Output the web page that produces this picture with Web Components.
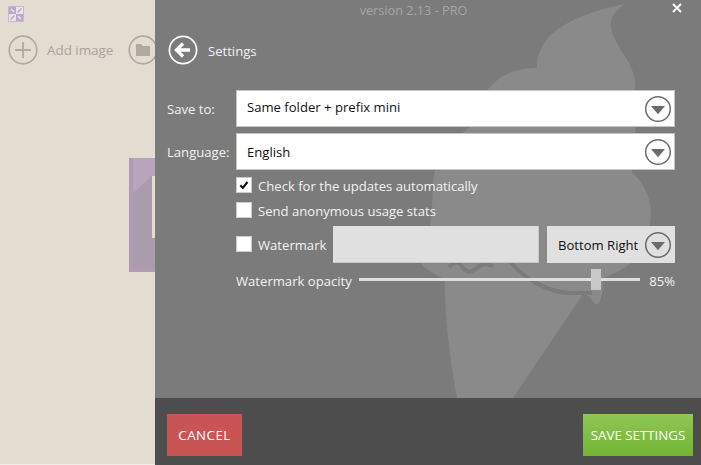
<!DOCTYPE html>
<html>
<head>
<meta charset="utf-8">
<title>Settings</title>
<style>
html,body{margin:0;height:100%;overflow:hidden;background:#e3ddd1;}
body{font:13.1px "Open Sans",sans-serif;}
settings-select[label="Save to:"]{--nudge:3px;}
</style>
</head>
<body>
<app-window>
	<side-pane slot="side"></side-pane>
	<settings-panel slot="panel">
		<settings-select label="Save to:" value="Same folder + prefix mini"></settings-select>
		<settings-select label="Language:" value="English"></settings-select>
		<settings-check checked>Check for the updates automatically</settings-check>
		<settings-check>Send anonymous usage stats</settings-check>
		<watermark-row></watermark-row>
		<opacity-slider value="85"></opacity-slider>
	</settings-panel>
</app-window>
<script>
const ARROW=`<svg class="arrow" width="28" height="28" viewBox="0 0 28 28"><circle cx="14" cy="14" r="12.3" fill="none" stroke="#6b6b6b" stroke-width="1.5"/><path d="M7 11h14l-7 8.300z" fill="#6b6b6b"/></svg>`;

function tpl(html){
	const t=document.createElement('template');
	t.innerHTML=html;
	return t;
}

const appTpl=tpl(`
<style>
	:host{display:flex;width:701px;height:465px;overflow:hidden;}
	::slotted([slot=side]){flex:0 0 155px;}
	::slotted([slot=panel]){flex:1;}
</style>
<slot name="side"></slot><slot name="panel"></slot>`);
class AppWindow extends HTMLElement{
	constructor(){
		super();
		this.attachShadow({mode:'open'}).appendChild(appTpl.content.cloneNode(true));
	}
}
customElements.define('app-window',AppWindow);

const sideTpl=tpl(`
<style>
	:host{display:block;position:relative;overflow:hidden;background:#e3ddd1;box-sizing:border-box;padding:6px 0 0 8px;height:465px;border-bottom:1px solid #f1eee8;}
	.logo{display:block;}
	.tools{display:flex;align-items:center;margin-top:13px;width:200px;color:#a7a399;font-size:13.4px;}
	.tools svg{display:block;flex:none;}
	.tools span{margin:0 15px 0 9px;white-space:nowrap;}
	.thumb{position:absolute;left:129px;top:158px;width:40px;height:114px;background:#b9a4be;overflow:hidden;}
	.thumb i{position:absolute;left:4px;top:18px;width:40px;height:92px;background:#aa9cad;clip-path:polygon(0 17px,19px 0,100% 0,100% 100%,0 100%);}
	.thumb b{position:absolute;left:0;top:0;width:4px;height:114px;background:#b09ab5;}
	.thumb s{position:absolute;left:0;bottom:0;width:40px;height:4px;background:#b09ab5;}
	.thumb u{position:absolute;left:23px;top:18px;width:3px;height:62px;background:#e2dfcf;}
</style>
<svg class="logo" width="16" height="16" viewBox="0 0 16 16"><rect width="16" height="16" fill="#c9b6d2"/><rect x="1" y="1" width="14" height="14" fill="#bda6c9"/><rect x="8" y="1" width="7" height="7" fill="#e9e3ea"/><rect x="1" y="8" width="7" height="7" fill="#e9e3ea"/><path d="M13.500 2.500L9.500 6.500M2.500 13.500l4-4" stroke="#bda6c9" stroke-width="1.500"/><path d="M3 3l3 3M13 13l-3-3" stroke="#ebe5ee" stroke-width="1.500"/></svg>
<div class="tools">
	<svg width="30" height="30" viewBox="0 0 30 30"><circle cx="15" cy="15" r="13.8" fill="none" stroke="#aeaaa0" stroke-width="1.7"/><path d="M15 7v16M7 15h16" stroke="#aeaaa0" stroke-width="1.8"/></svg>
	<span>Add image</span>
	<svg width="30" height="30" viewBox="0 0 30 30"><circle cx="15" cy="15" r="13.8" fill="none" stroke="#aeaaa0" stroke-width="1.7"/><path d="M8 9h5l1.500 2H22v10H8z" fill="#aeaaa0"/></svg>
</div>
<div class="thumb"><b></b><s></s><i></i><u></u></div>`);
class SidePane extends HTMLElement{
	constructor(){
		super();
		this.attachShadow({mode:'open'}).appendChild(sideTpl.content.cloneNode(true));
	}
}
customElements.define('side-pane',SidePane);

const panelTpl=tpl(`
<style>
	:host{display:flex;flex-direction:column;position:relative;height:465px;background:#7b7b7b;color:#f2f2f2;overflow:hidden;z-index:1;}
	.cone{position:absolute;left:0;top:0;}
	.version{position:relative;height:20px;line-height:21px;text-align:center;color:#a6a6a6;font-size:12.7px;padding-right:29px;}
	.close{position:absolute;right:17px;top:2px;}
	.head{position:relative;display:flex;align-items:center;gap:10px;padding:0 0 0 13px;height:30px;margin-top:15px;}
	.head svg{display:block;}
	.head span{padding-top:2px;}
	.form{position:relative;flex:1;display:flex;flex-direction:column;padding:25px 26px 0 12px;}
	.foot{position:relative;flex:none;height:67px;box-sizing:border-box;background:#4d4d4d;padding:16px 8px 9px 12px;display:flex;justify-content:space-between;}
	button{border:0;font:13.3px "Open Sans",sans-serif;color:#fff;padding:0;height:42px;}
	.cancel{width:75px;background:#c85454;letter-spacing:.5px;}
	.save{width:110px;background:linear-gradient(#8ec756,#72b433);}
</style>
<svg class="cone" width="546" height="398" viewBox="155 0 546 398">
	<path fill="#8a8a8a" d="M625 4C600 9 560 20 545 42C538 52 537 60 537 68C525 68 507 70 493 84C480 96 472 112 470 127C452 140 438 155 435 170C431 190 434 215 428 235C424 247 418 252 420 262C424 270 433 272 445 280C444 310 450 360 457 398H513L583 294C588 295 590 297 592 300C595 306 598 305 600 301C602 295 603 285 604 278C612 274 630 268 640 253C650 236 653 215 649 200C646 188 640 180 632 172C636 150 636 105 635 82C633 60 615 48 611 28C609 18 617 9 625 4Z"/>
	<path fill="none" stroke="#7b7b7b" stroke-width="4" d="M449 267C456 260 459 262 463 268C468 274 473 272 478 267C482 263 489 264 493 266M510 262C526 280 548 292 570 293L592 293"/>
</svg>
<div class="version">version 2.13 - PRO<svg class="close" width="14" height="14" viewBox="0 0 14 14"><path d="M3 2l8 8M11 2l-8 8" stroke="#fff" stroke-width="1.800"/></svg></div>
<div class="head">
	<svg width="30" height="30" viewBox="0 0 30 30"><circle cx="15" cy="15" r="13.600" fill="none" stroke="#fff" stroke-width="1.700"/><path d="M8 15h14M15 8.500L8.500 15l6.500 6.500" fill="none" stroke="#fff" stroke-width="3.300"/></svg>
	<span>Settings</span>
</div>
<div class="form"><slot></slot></div>
<div class="foot"><button class="cancel">CANCEL</button><button class="save">SAVE SETTINGS</button></div>`);
class SettingsPanel extends HTMLElement{
	constructor(){
		super();
		this.attachShadow({mode:'open'}).appendChild(panelTpl.content.cloneNode(true));
	}
}
customElements.define('settings-panel',SettingsPanel);

const selectTpl=tpl(`
<style>
	:host{display:flex;align-items:center;height:37px;margin-bottom:6px;}
	label{flex:0 0 69px;white-space:nowrap;}
	.box{flex:1;height:37px;box-sizing:border-box;border:1px solid #c9c5bb;background:#fff;color:#111;display:flex;align-items:center;justify-content:space-between;padding:0 2px 0 10px;}
	.box span{padding-bottom:var(--nudge,0);}
	svg{display:block;}
</style>
<label></label><div class="box"><span></span>${ARROW}</div>`);
class SettingsSelect extends HTMLElement{
	constructor(){
		super();
		const shadow=this.attachShadow({mode:'open'});
		shadow.appendChild(selectTpl.content.cloneNode(true));
		shadow.querySelector('label').textContent=this.getAttribute('label');
		shadow.querySelector('span').textContent=this.getAttribute('value');
	}
}
customElements.define('settings-select',SettingsSelect);

const checkTpl=tpl(`
<style>
	:host{display:flex;align-items:center;gap:6px;height:24px;margin:-3px 0 4px 69px;}
	.tick{flex:none;width:16px;height:16px;box-sizing:border-box;background:#fff;border:1px solid #ccc;display:block;}
	span{padding-top:2px;}
</style>
<svg class="tick" viewBox="0 0 14 14"><path class="mark" d="M3.300 7.300l2.500 2.700L10.500 4" fill="none" stroke="#111" stroke-width="2.100"/></svg><span><slot></slot></span>`);
class SettingsCheck extends HTMLElement{
	constructor(){
		super();
		const shadow=this.attachShadow({mode:'open'});
		shadow.appendChild(checkTpl.content.cloneNode(true));
		if(!this.hasAttribute('checked'))
			shadow.querySelector('.mark').remove();
	}
}
customElements.define('settings-check',SettingsCheck);

const wmTpl=tpl(`
<style>
	:host{display:flex;align-items:center;height:37px;margin:0 0 0 69px;}
	.tick{flex:none;width:16px;height:16px;box-sizing:border-box;background:#fff;border:1px solid #ccc;margin:-1px 6px 0 0;}
	.name{flex:0 0 75px;padding-top:1px;}
	.input{flex:0 0 206px;height:37px;box-sizing:border-box;background:#e0e0e0;border:1px solid #c6c6c6;border-width:0 1px 1px 0;margin-right:8px;}
	.pos{flex:1;height:37px;box-sizing:border-box;background:#e0e0e0;color:#111;display:flex;align-items:center;justify-content:space-between;padding:0 3px 0 11px;white-space:nowrap;}
	svg.arrow{display:block;flex:none;}
</style>
<span class="tick"></span><span class="name">Watermark</span><div class="input"></div><div class="pos"><span>Bottom Right</span>${ARROW}</div>`);
class WatermarkRow extends HTMLElement{
	constructor(){
		super();
		this.attachShadow({mode:'open'}).appendChild(wmTpl.content.cloneNode(true));
	}
}
customElements.define('watermark-row',WatermarkRow);

const sliderTpl=tpl(`
<style>
	:host{display:flex;align-items:center;height:21px;margin:6px 0 0 69px;}
	.name{flex:0 0 123px;white-space:nowrap;padding-top:3px;}
	.track{position:relative;flex:0 0 281px;height:3px;background:#dedede;}
	.thumb{position:absolute;top:-9px;width:10px;height:21px;background:#c9c9c9;transform:translateX(-50%);margin-left:-2px;}
	.val{flex:1;text-align:right;padding-top:3px;}
</style>
<span class="name">Watermark opacity</span><div class="track"><div class="thumb"></div></div><span class="val"></span>`);
class OpacitySlider extends HTMLElement{
	constructor(){
		super();
		const shadow=this.attachShadow({mode:'open'});
		shadow.appendChild(sliderTpl.content.cloneNode(true));
		const v=this.getAttribute('value');
		shadow.querySelector('.thumb').style.left=v+'%';
		shadow.querySelector('.val').textContent=v+'%';
	}
}
customElements.define('opacity-slider',OpacitySlider);
</script>
</body>
</html>
